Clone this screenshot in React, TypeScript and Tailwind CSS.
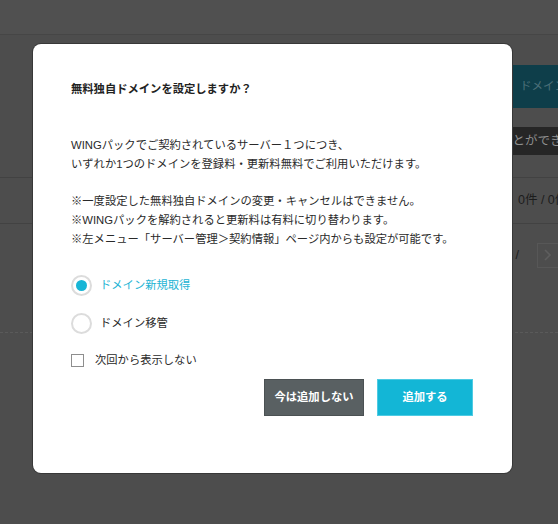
import React from "react";

const font = { fontFamily: '"Liberation Sans", "Noto Sans CJK JP", sans-serif' };

export default function App() {
  return (
    <div
      className="relative w-[558px] h-[524px] overflow-hidden bg-[#4d4d4d] text-[11.3px]"
      style={font}
    >
      {/* background page (dimmed) */}
      <div className="flex flex-col w-full text-[12.5px]">
        <div className="h-[35px] bg-[#505050] border-b border-[#464646]" />
        <div className="h-[30px]" />
        <div className="flex justify-end h-[43px]">
          <div className="w-[58px] bg-[#0e3e4a] flex items-center pl-[20px] text-[11.5px] text-[#4c6f78] whitespace-nowrap overflow-hidden">
            <span className="shrink-0">ドメイン取得</span>
          </div>
        </div>
        <div className="h-[19px]" />
        <div className="flex justify-end h-[28px] relative">
          <div className="w-[58px] bg-[#262626] flex items-center text-[#8f8f8f] whitespace-nowrap overflow-hidden">
            <span className="shrink-0">ことができます</span>
          </div>
        </div>
        <div className="h-[22px]" />
        <div className="h-[47px] border-t border-b border-[#424242] flex items-center justify-end overflow-hidden">
          <div className="w-[40px] whitespace-nowrap overflow-hidden text-[#1c1c1c]">
            0件 / 0件
          </div>
        </div>
        <div className="flex justify-end items-center h-[62px] gap-[18px] overflow-hidden">
          <span className="text-[#1c1c1c]">/</span>
          <div className="w-[21px] h-[25px] border border-[#575757] border-r-0 flex items-center justify-center">
            <svg width="8" height="12" viewBox="0 0 8 12">
              <path d="M1 1l5 5-5 5" fill="none" stroke="#5e5e5e" strokeWidth="1.6" />
            </svg>
          </div>
        </div>
        <div className="h-[46px]" />
        <div className="border-t border-dashed border-[#5a5a5a]" />
      </div>

      {/* modal */}
      <div className="absolute left-[33px] top-[44px] w-[479px] h-[429px] rounded-[8px] bg-white shadow-[0_0_0_1px_#383838] pt-[36px] pl-[38px] pr-[39px] flex flex-col">
        <div className="leading-[19px] font-bold text-[#222]">無料独自ドメインを設定しますか？</div>
        <div className="mt-[37px] leading-[18.7px] text-[#2a2a2a]">
          <p>WINGパックでご契約されているサーバー１つにつき、</p>
          <p>いずれか1つのドメインを登録料・更新料無料でご利用いただけます。</p>
          <p>&nbsp;</p>
          <p>※一度設定した無料独自ドメインの変更・キャンセルはできません。</p>
          <p>※WINGパックを解約されると更新料は有料に切り替わります。</p>
          <p>※左メニュー「サーバー管理＞契約情報」ページ内からも設定が可能です。</p>
        </div>

        <div className="mt-[26px] flex flex-col">
          <label className="h-[22px] flex items-center">
            <span className="w-[21px] h-[21px] rounded-full border-2 border-[#dcdcdc] flex items-center justify-center">
              <span className="w-[11px] h-[11px] rounded-full bg-[#17b5d6]" />
            </span>
            <span className="ml-[8px] text-[#1db4d4]">ドメイン新規取得</span>
          </label>
          <label className="mt-[16px] h-[22px] flex items-center">
            <span className="w-[21px] h-[21px] rounded-full border-2 border-[#dcdcdc]" />
            <span className="ml-[8px] text-[#2a2a2a]">ドメイン移管</span>
          </label>
          <label className="mt-[15px] h-[22px] flex items-center">
            <span className="w-[13px] h-[13px] border border-[#8e8e8e] bg-white" />
            <span className="ml-[11px] text-[#2a2a2a]">次回から表示しない</span>
          </label>
        </div>

        <div className="mt-[8px] flex justify-end gap-[13px]">
          <button className="w-[100px] h-[37px] bg-[#596062] border border-[#4b5153] text-white font-semibold">
            今は追加しない
          </button>
          <button className="w-[96px] h-[37px] bg-[#13b6d6] border border-[#4ecbe3] text-white font-semibold">
            追加する
          </button>
        </div>
      </div>
    </div>
  );
}
